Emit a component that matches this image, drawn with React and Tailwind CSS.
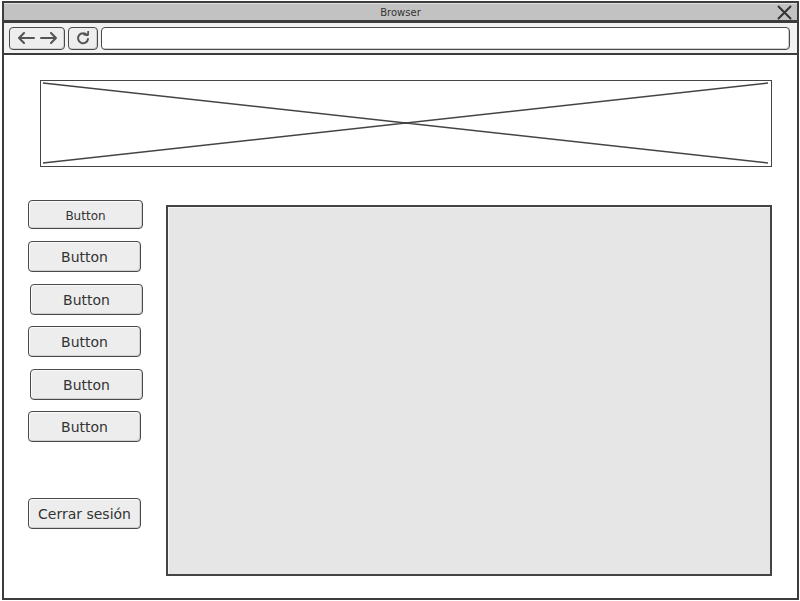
import React from "react";

const font = { fontFamily: '"DejaVu Sans", "Liberation Sans", sans-serif' };

function Btn({ children, cls = "", text = "text-[14px]" }) {
  return (
    <div
      className={`flex items-center justify-center pt-[2px] rounded-[4px] border-[1.5px] border-[#4a4a4a] bg-[#ededed] shadow-[inset_-1px_-1px_0_#cfcfcf,inset_1px_1px_0_#fafafa] text-[#333] ${text} ${cls}`}
    >
      {children}
    </div>
  );
}

export default function App() {
  return (
    <div className="w-[800px] h-[601px] bg-white pt-[1px] pl-[2px]" style={font}>
      <div className="w-[797px] h-[599px] border-2 border-[#3c3c3c] flex flex-col bg-white">
        {/* Title bar */}
        <div className="h-[20px] bg-[#c2c2c2] border-b-[3px] border-[#3c3c3c] border-t border-t-[#e0e0e0] relative flex items-center justify-center">
          <span className="text-[10px] text-[#333] leading-none pt-[1px]">Browser</span>
          <svg className="absolute right-[5px] top-[1px]" width="15" height="15" viewBox="0 0 15 15">
            <path d="M1.5 1.5 L13.5 13.5 M13.5 1.5 L1.5 13.5" stroke="#333" strokeWidth="2" strokeLinecap="round" />
          </svg>
        </div>
        {/* Toolbar */}
        <div className="h-[32px] bg-[#f2f2f2] border-b-2 border-[#3c3c3c] flex items-center pl-[5px] pr-[7px] gap-[3px]">
          <div className="w-[56px] h-[23px] rounded-[4px] border-[1.5px] border-[#4a4a4a] bg-[#eeeeee] shadow-[inset_-1px_-1px_0_#cfcfcf] flex items-center justify-center gap-[5px]">
            <svg width="18" height="12" viewBox="0 0 18 12">
              <path d="M17 6 H2 M7 1 L2 6 L7 11" stroke="#555" strokeWidth="2" fill="none" strokeLinecap="round" strokeLinejoin="round" />
            </svg>
            <svg width="18" height="12" viewBox="0 0 18 12">
              <path d="M1 6 H16 M11 1 L16 6 L11 11" stroke="#555" strokeWidth="2" fill="none" strokeLinecap="round" strokeLinejoin="round" />
            </svg>
          </div>
          <div className="w-[30px] h-[23px] rounded-[4px] border-[1.5px] border-[#4a4a4a] bg-[#eeeeee] shadow-[inset_-1px_-1px_0_#cfcfcf] flex items-center justify-center">
            <svg width="14" height="14" viewBox="0 0 14 14">
              <path d="M11 4.2 A5 5 0 1 0 12 8" stroke="#555" strokeWidth="2" fill="none" strokeLinecap="round" />
              <path d="M8 3.5 L12 4 L12.2 0.5" stroke="#555" strokeWidth="1.8" fill="none" strokeLinecap="round" strokeLinejoin="round" />
            </svg>
          </div>
          <div className="flex-1 h-[23px] rounded-[4px] border-[1.5px] border-[#4a4a4a] bg-white shadow-[inset_-1px_-1px_0_#cfcfcf]" />
        </div>
        {/* Content */}
        <div className="flex-1 flex flex-col">
          <div className="mt-[25px] ml-[36px] w-[732px] h-[87px] border-[1.5px] border-[#444] relative">
            <svg className="absolute inset-0" width="729" height="84" viewBox="0 0 729 84" preserveAspectRatio="none">
              <path d="M2 2 L727 82 M727 2 L2 82" stroke="#444" strokeWidth="1.5" />
            </svg>
          </div>
          <div className="flex mt-[33px]">
            <div className="flex flex-col w-[138px] pl-[24px]">
              <Btn cls="w-[115px] h-[29px]" text="text-[12px]">Button</Btn>
              <Btn cls="w-[113px] h-[31px] mt-[12px]">Button</Btn>
              <Btn cls="w-[113px] h-[31px] mt-[12px] ml-[2px]">Button</Btn>
              <Btn cls="w-[113px] h-[31px] mt-[11px]">Button</Btn>
              <Btn cls="w-[113px] h-[31px] mt-[12px] ml-[2px]">Button</Btn>
              <Btn cls="w-[113px] h-[31px] mt-[11px]">Button</Btn>
              <Btn cls="w-[113px] h-[31px] mt-[56px]">Cerrar sesión</Btn>
            </div>
            <div className="mt-[5px] ml-[24px] w-[606px] h-[371px] border-2 border-[#444] bg-[#e6e6e6] shadow-[inset_1px_1px_0_#f4f4f4]" />
          </div>
        </div>
      </div>
    </div>
  );
}
